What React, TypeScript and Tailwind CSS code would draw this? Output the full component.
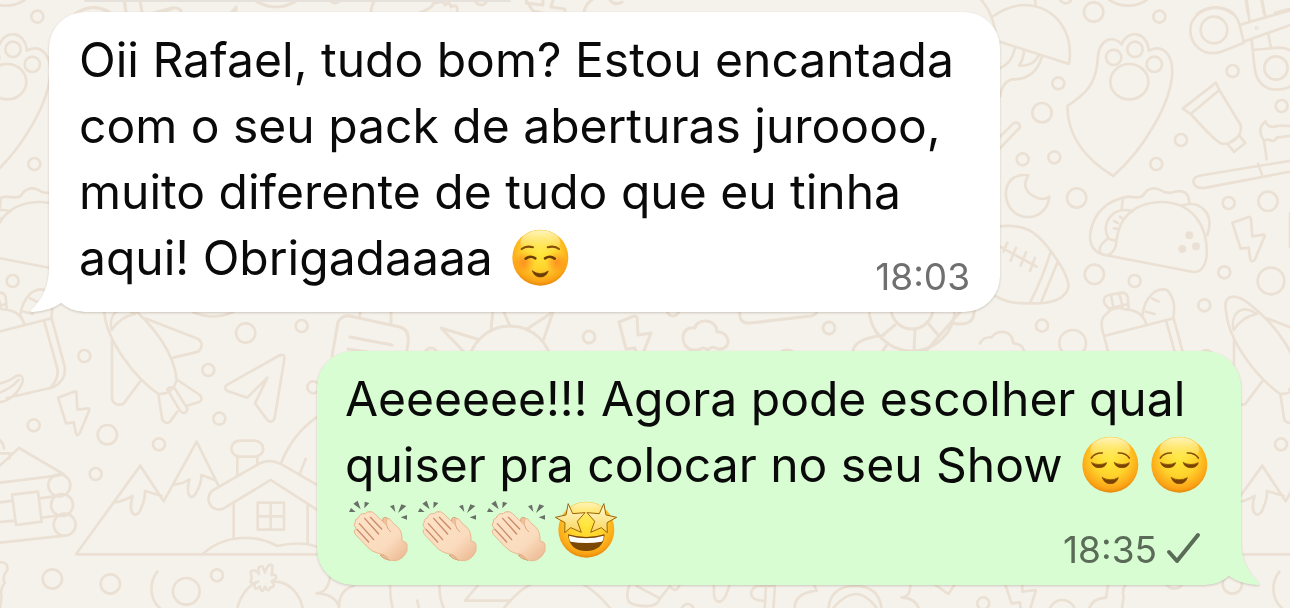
import type { ReactNode } from 'react';

const TILE_WIDTH = 1122;

type Circle = [x: number, y: number, r: number];

// ── Wallpaper ─────────────────────────────────────────

const SKY_CIRCLES: Circle[] = [
  [341, 36, 29], [538, 50, 18], [235, 250, 18], [186, 338, 29], [128, 478, 18], [223, 472, 18],
  [603, 420, 18], [529, 492, 18], [290, 594, 29], [343, 823, 29], [464, 843, 18], [186, 977, 18],
  [278, 1030, 40], [401, 172, 23], [465, 148, 23], [523, 193, 23], [702, 90, 40], [888, 204, 35],
  [758, 213, 18], [905, 318, 18], [746, 609, 18], [864, 604, 29], [733, 817, 18], [873, 843, 40],
  [673, 916, 18], [257, -8, 18],
];

const GROUND_CIRCLES: Circle[] = [
  [737, 99, 29], [905, 78, 18], [253, 168, 18], [625, 210, 18], [658, 356, 18], [940, 262, 18],
  [101, 376, 18], [322, 404, 29], [477, 433, 18], [287, 522, 18], [157, 837, 29], [331, 852, 29],
  [559, 874, 40], [651, 826, 18], [178, 556, 33], [186, 615, 33], [194, 674, 33],
];

function Circles({ items }: { items: Circle[] }) {
  return items.map(([x, y, r]) => <circle key={`${x}-${y}`} cx={x} cy={y} r={r} />);
}

function Doodles() {
  return (
    <>
      <g transform="translate(980 0) scale(0.3333)" strokeWidth="8">
        <Circles items={SKY_CIRCLES} />
        {/* umbrella */}
        <path d="M0 -5Q42 40 50 120M40 48Q90 15 135 15C225 18 283 95 267 192L50 122M165 0L167 18M105 145Q95 190 60 205M132 152Q130 180 117 197Q160 200 175 168M185 172Q165 240 95 238Q64 250 60 290M388 0Q445 34 500 0" />
        {/* paw */}
        <path d="M262 318C320 280 348 250 353 180C355 115 400 105 425 133C440 90 500 90 507 152C550 130 577 165 577 215C575 300 500 440 400 528C320 480 262 410 262 318Z" />
        <ellipse cx="448" cy="245" rx="57" ry="53" />
        {/* wand and scissors */}
        <path d="M55 415L100 370Q118 362 120 382L55 450M800 0L808 60M845 0L855 45M778 75L940 28M790 125L940 72M778 72L792 128L722 156C665 172 631 130 631 90C631 20 755 -10 778 72M865 103L872 138M815 120L818 150Q870 145 900 143C935 145 965 170 965 204C960 270 890 275 865 265C815 245 825 190 815 120" />
        <circle cx="830" cy="83" r="2" />
        {/* tube */}
        <path d="M608 326L708 248L718 270L632 342ZM718 270L782 375Q786 395 775 408Q755 435 725 431Q710 428 632 342M743 432L778 407L796 429L762 456Z" />
        {/* toothbrush */}
        <path d="M945 480L670 525Q640 528 640 545Q645 568 678 563L945 512M834 492L846 524M860 478L852 422Q828 385 857 364Q862 380 880 381Q910 372 945 382M852 422Q865 415 875 423Q890 420 890 413Q915 410 945 405" />
        {/* moon */}
        <path d="M145 526C50 512 60 655 147 651C185 650 205 620 208 590Q195 600 175 595C130 580 130 550 145 526Z" />
        {/* rugby ball */}
        <path d="M50 680C130 670 165 690 210 750C240 790 265 835 266 860C255 905 200 912 150 910C110 912 80 908 40 885M60 740L170 800M82 728L70 755M108 743L92 782M138 757L122 797M165 773L150 813M212 755Q190 830 150 908M232 788L184 905" />
        {/* taco */}
        <path d="M370 764Q325 750 331 700C340 640 380 600 445 590Q475 595 488 588C505 560 530 560 550 575Q570 582 585 575Q615 568 625 590L628 608M370 764L640 816Q672 818 680 770C685 680 640 605 540 606C450 610 415 665 410 720Q408 755 385 765M428 598L425 628M458 634C400 615 360 670 385 715Q392 720 408 722M385 715Q355 735 360 755M608 616C660 600 705 640 682 705M402 663L414 669M420 650L430 658M402 685L415 687" />
        <g fill="#ebe0d4">
          <circle cx="628" cy="706" r="8" />
          <circle cx="648" cy="739" r="8" />
          <circle cx="607" cy="747" r="8" />
        </g>
        {/* bolt */}
        <path d="M757 668L806 651Q813 650 813 658L817 709L850 704Q857 704 853 711L825 778Q815 790 811 778L806 743L782 746Z" />
        <path d="M930 740V640M0 1030Q10 1010 35 1012C50 990 95 985 100 1030Q125 1030 132 1052" />
      </g>

      <g transform="translate(0 300) scale(0.3333)" strokeWidth="8">
        <Circles items={GROUND_CIRCLES} />
        {/* grocery bag */}
        <path d="M-54 108L155 55L194 200Q200 240 160 262L20 294M133 65L172 205Q178 235 150 265M-54 108Q-70 60 -50 45L-35 30Q-10 18 8 28Q60 30 72 70M-54 108L-40 160M-35 30L-52 12Q-60 -10 -40 -15L0 -22Q18 -22 18 0L20 28M-35 25L18 12M-32 -10L-25 25M-8 -18L2 18M62 42C68 -5 100 -40 135 -30Q165 0 153 58M90 -5L110 5M72 35L98 42M-20 255Q30 245 48 228Q70 220 68 245C50 290 20 305 -10 308M-20 285Q30 270 56 240" />
        {/* bolt */}
        <path d="M174 293L222 275L229 275L232 329L264 325Q270 325 267 332L240 398Q232 412 228 400L221 367L198 370Z" />
        {/* rocket */}
        <path d="M313 38C300 -20 340 -20 380 10C470 80 525 170 530 240C520 275 500 282 475 282C400 230 320 120 313 38M335 90C325 50 350 5 405 42Q360 50 335 90M435 55L595 117Q615 135 595 155L520 173M336 120V295Q340 320 370 312L420 245M475 282L487 360Q500 375 510 365L532 335M532 240L600 285Q610 300 598 306L560 317M502 268L540 332Q555 348 563 327L524 265Q510 258 502 268" />
        {/* paper plane */}
        <path d="M835 168Q855 158 853 178L824 355Q815 372 802 360L765 310L802 233L742 293L680 272Q670 262 682 254Z" />
        {/* log cabin */}
        <path d="M-20 515L57 444L190 522M0 548L178 526M0 607L38 602M0 666L45 662M118 595L158 590M125 653L165 648M0 728L194 707M36 584L114 575L125 665L48 675ZM0 460H30L28 475M0 420Q10 430 12 445" />
        {/* mountains and house */}
        <path d="M950 763H228L421 497L491 604L590 425L657 560M340 608Q370 605 398 588C380 650 415 660 425 620Q435 600 435 573L485 588M525 553Q550 552 568 538C555 600 580 600 590 575Q605 550 604 525L645 540M712 525V470M772 490V470M722 422H760C800 422 800 470 760 470H722C685 470 685 422 722 422M960 560L845 493Q812 475 780 490L640 570C610 590 630 640 670 626L812 540L960 635M701 607V715M923 610V730M773 608H852V689H773ZM812 608V689M773 649H852M610 760C680 700 770 705 832 738Q900 722 950 740M845 485Q880 400 950 352M900 520L917 477" />
        {/* pompom hat */}
        <path d="M712 924C725 875 755 850 775 845M825 845C870 845 900 885 908 924M752 815Q765 805 777 822Q770 795 788 800L795 818Q805 785 818 798L815 825Q830 820 828 835L815 845Q830 860 812 862Q805 880 795 860Q785 885 780 860Q760 875 765 850Q745 850 755 835Z" />
        <path d="M472 815C445 850 450 900 480 924M0 787Q25 785 22 810Q5 832 14 848Q-2 870 5 890L0 924M-41 850L-48 893Q-90 895 -100 930" />
      </g>

      {/* strip between the bubbles */}
      <g strokeWidth="3">
        <path d="M332 356L338 322Q342 315 350 316L400 327Q410 330 408 343L406 356M359 318L361 310M391 323V310M350 337L392 345M348 349L380 354" />
        <circle cx="510" cy="368" r="42" />
        <path d="M493 310L491 329M503 310L510 326M477 339L441 328L465 353M527 329L553 312L543 341M193 312Q213 321 233 312" />
        <path d="M619 322L634 316L637 317L638 335L651 333L642 356M619 322L626 349L635 348L637 356" />
        <path d="M692 350C679 347 680 325 695 328C696 318 717 318 717 332C730 331 733 350 718 349Q712 345 708 350Q702 346 699 350Z" />
        <path d="M740 310Q738 324 750 323L811 316Q817 315 817 310M853 352Q853 339 884 335M951 323Q975 328 974 310M926 351L960 312M883 335L895 325M888 343L882 352M914 351L915 330M927 322L938 335" />
        <circle cx="912" cy="308" r="43" />
        <circle cx="912" cy="308" r="21" />
        <circle cx="589" cy="337" r="6" />
        <circle cx="673" cy="310" r="6" />
        <circle cx="829" cy="328" r="6" />
        <circle cx="431" cy="354" r="6" />
        <circle cx="787" cy="360" r="10" />
      </g>

      {/* top edge */}
      <g strokeWidth="3">
        <path d="M75 14Q93 1 111 14M124 0L126 13M140 0L142 13M153 13L172 8Q180 7 182 13M231 13L236 7V13M254 0Q276 14 298 0M375 0Q371 6 371 13M432 0Q438 6 419 13M436 3Q444 0 445 5Q450 1 451 7Q459 3 457 13M526 3L543 5V0M526 0L533 11L543 13M553 0L551 7L565 9V13M584 13Q585 4 592 0M610 0Q615 6 622 2" />
        <circle cx="335" cy="-3" r="6" />
        <circle cx="481" cy="-1" r="6" />
      </g>

      {/* bottom edge */}
      <g transform="translate(300 570) scale(0.3333)" strokeWidth="8">
        <path d="M92 0Q90 68 50 70Q105 72 117 110Q118 60 160 48M270 40Q270 90 280 120M352 92L358 120M418 40Q418 95 435 120M532 48L495 92H632M612 114Q660 55 700 40M845 40Q890 65 930 114M990 40Q970 95 1000 103Q1070 120 1080 85L1010 48M1080 85L1110 48Q1130 75 1140 40" />
        <circle cx="1163" cy="120" r="18" />
        <g transform="translate(1170 0)">
          <path d="M72 40V60Q70 95 88 95Q105 95 120 40M255 48L250 120M228 48L224 120M255 48H200C175 60 175 95 226 92M370 40L380 62Q310 70 314 120M415 120Q420 48 495 48Q570 48 575 120M430 114Q500 30 560 114M660 40Q665 80 635 82Q680 85 688 120M730 40L775 72L797 40M945 40L965 100L990 97L993 120M997 40V65L1038 60L1020 120" />
          <circle cx="880" cy="100" r="18" />
          <circle cx="1117" cy="130" r="40" />
        </g>
      </g>
    </>
  );
}

function Wallpaper() {
  return (
    <svg
      aria-hidden="true"
      className="absolute inset-0 h-full w-full"
      viewBox="0 0 1290 608"
      preserveAspectRatio="xMinYMin slice"
      fill="none"
      stroke="#ebe0d4"
      strokeLinecap="round"
      strokeLinejoin="round"
    >
      <defs>
        <radialGradient id="face" cx="0.5" cy="0.4" r="0.62">
          <stop offset="0" stopColor="#ffe83a" />
          <stop offset="0.5" stopColor="#ffd22c" />
          <stop offset="0.85" stopColor="#fba416" />
          <stop offset="1" stopColor="#e08008" />
        </radialGradient>
        <linearGradient id="shine" x1="0" y1="0" x2="0" y2="1">
          <stop offset="0" stopColor="#fffbd0" stopOpacity="0.9" />
          <stop offset="1" stopColor="#fff27a" stopOpacity="0" />
        </linearGradient>
        <radialGradient id="blush">
          <stop offset="0" stopColor="#ff6a1a" stopOpacity="0.6" />
          <stop offset="1" stopColor="#ff6a1a" stopOpacity="0" />
        </radialGradient>
        <linearGradient id="star" x1="0" y1="0" x2="0" y2="1">
          <stop offset="0" stopColor="#fffbd8" />
          <stop offset="1" stopColor="#fbd55a" />
        </linearGradient>
        <linearGradient id="skin" x1="0" y1="0" x2="1" y2="1">
          <stop offset="0" stopColor="#fde3c8" />
          <stop offset="0.65" stopColor="#fadbbd" />
          <stop offset="1" stopColor="#eab48c" />
        </linearGradient>
      </defs>
      {[-TILE_WIDTH, 0, TILE_WIDTH].map((x) => (
        <g key={x} transform={`translate(${x} 0)`}>
          <Doodles />
        </g>
      ))}
      <path d="M85 1H510" stroke="#e6e1da" strokeWidth="2" />
    </svg>
  );
}

// ── Emoji ─────────────────────────────────────────────

function Emoji({ label, children }: { label: string; children: ReactNode }) {
  return (
    <svg role="img" aria-label={label} viewBox="0 0 207 198" className="h-[66px] w-[69px] shrink-0" fill="none" strokeLinecap="round" strokeLinejoin="round">
      {children}
    </svg>
  );
}

function Face() {
  return (
    <>
      <circle cx="103" cy="98" r="84" fill="url(#face)" />
      <ellipse cx="103" cy="53" rx="60" ry="37" fill="url(#shine)" />
    </>
  );
}

function SmilingFace() {
  return (
    <Emoji label="☺️">
      <Face />
      <circle cx="55" cy="112" r="32" fill="url(#blush)" />
      <circle cx="151" cy="112" r="32" fill="url(#blush)" />
      <path d="M47 72Q60 61 81 67M125 67Q146 61 159 72" stroke="#855005" strokeWidth="6" />
      <path d="M59 101Q73 90 88 100M117 100Q132 90 146 101" stroke="#6b3c06" strokeWidth="8" />
      <path d="M79 138Q103 154 127 138Q120 156 103 156Q86 156 79 138Z" fill="#6b3c06" stroke="#6b3c06" strokeWidth="2" />
    </Emoji>
  );
}

function RelievedFace() {
  return (
    <Emoji label="😌">
      <Face />
      <path d="M46 78Q57 62 79 63M127 63Q149 62 160 78" stroke="#855005" strokeWidth="5" />
      <path d="M47 92Q69 103 92 92Q88 107 69 107Q52 107 47 92ZM115 92Q138 103 160 92Q156 107 138 107Q119 107 115 92Z" fill="#7a4303" stroke="#7a4303" strokeWidth="2" />
      <path d="M79 137Q103 150 127 137Q121 155 103 155Q85 155 79 137Z" fill="#7a4303" stroke="#7a4303" strokeWidth="2" />
    </Emoji>
  );
}

function ClappingHands() {
  return (
    <Emoji label="👏🏻">
      <g transform="translate(-15 -21)">
        <path d="M40 38L53 29L62 55ZM74 32L88 36L73 52ZM33 51L47 63H27ZM150 46L162 41L166 63ZM184 40L199 45L174 66ZM182 79L201 72V86Z" fill="#697068" />
        <path d="M128 92Q126 76 139 80Q150 84 152 100L140 190L120 192Q130 205 150 208L120 185Z" fill="#f0c39d" stroke="#d99f76" strokeWidth="3" />
        <path d="M88 62Q96 60 104 68L140 103Q137 88 143 82Q148 80 155 91Q160 99 172 107Q188 122 186 150Q200 152 201 160V180Q188 207 166 209Q150 210 143 203Q140 191 118 188Q96 184 80 166L46 130Q38 120 48 112Q38 102 46 93Q44 83 54 82Q60 65 76 68Q80 61 88 62Z" fill="url(#skin)" stroke="#e9b88f" strokeWidth="3" />
        <path d="M91 79L125 114M74 82L116 129M58 98L101 146M51 115L86 153" stroke="#c98a67" strokeWidth="4" />
        <path d="M140 104Q143 116 152 122" stroke="#dda57c" strokeWidth="3" />
      </g>
    </Emoji>
  );
}

function StarStruckFace() {
  return (
    <Emoji label="🤩">
      <g transform="translate(0 -3)">
        <Face />
      </g>
      <g transform="translate(-636 -23)">
        <g fill="url(#star)" stroke="#9c6408" strokeWidth="3">
          <path d="M685 41L698 70L735 67L712 93L724 126L692 112L674 127L675 97L646 81L677 74Z" />
          <path d="M791 41L778 70L741 67L764 93L752 126L784 112L802 127L801 97L830 81L799 74Z" />
        </g>
        <path d="M684 132Q738 148 794 132Q790 182 738 182Q688 182 684 132Z" fill="#7c4805" />
        <path d="M687 136Q738 151 791 136Q791 150 785 154Q738 162 692 154Q687 150 687 136Z" fill="#fff" />
      </g>
    </Emoji>
  );
}

// ── Messages ──────────────────────────────────────────

function IncomingTail() {
  return (
    <svg aria-hidden="true" viewBox="0 0 50 50" className="absolute bottom-0 -left-5 size-[50px]" fill="#fff">
      <path d="M20 6Q20 31 2 48Q1 50 4 50Q21 49 32 41L50 28L28 0Z" />
    </svg>
  );
}

function OutgoingTail() {
  return (
    <svg aria-hidden="true" viewBox="0 0 50 50" className="absolute -right-5 bottom-0 size-[50px]" fill="#d8fdd2">
      <path d="M30 6Q30 31 48 48Q49 50 46 50Q29 49 18 41L0 28L22 0Z" />
    </svg>
  );
}

function Line({ children }: { children: ReactNode }) {
  return <div className="flex h-[66px] items-center whitespace-pre">{children}</div>;
}

export default function App() {
  return (
    <main className="relative min-h-screen overflow-hidden bg-[#f5f2eb] font-['Inter','Liberation_Sans',sans-serif] text-[48px] leading-[66px] text-[#0a0a0a]">
      <Wallpaper />
      <div className="relative flex flex-col gap-[39px] px-[49px] pt-3">
        <article className="relative w-full max-w-[951px] self-start rounded-[36px] bg-white px-[30px] py-[15px] drop-shadow-[0_1px_1px_rgba(90,70,50,0.25)]">
          <IncomingTail />
          <Line>Oii Rafael, tudo bom? Estou encantada</Line>
          <Line>com o seu pack de aberturas juroooo,</Line>
          <Line>muito diferente de tudo que eu tinha</Line>
          <div className="flex min-h-[72px] justify-between">
            <Line>
              aqui! Obrigadaaaa <SmilingFace />
            </Line>
            <time className="self-end text-[37px] leading-10 text-[#6f6f6f]">18:03</time>
          </div>
        </article>

        <article className="relative w-full max-w-[924px] self-end rounded-[36px] bg-[#d8fdd2] px-[28px] py-[15px] drop-shadow-[0_1px_1px_rgba(90,70,50,0.25)]">
          <OutgoingTail />
          <Line>Aeeeeee!!! Agora pode escolher qual</Line>
          <Line>
            quiser pra colocar no seu Show <RelievedFace />
            <RelievedFace />
          </Line>
          <div className="flex min-h-[72px] justify-between">
            <Line>
              <ClappingHands />
              <ClappingHands />
              <ClappingHands />
              <StarStruckFace />
            </Line>
            <div className="flex items-center gap-2 self-end text-[#5a6b57]">
              <time className="text-[37px] leading-10">18:35</time>
              <svg role="img" aria-label="Enviada" viewBox="0 0 48 40" className="h-10 w-12" fill="none" stroke="currentColor" strokeWidth="4" strokeLinecap="round" strokeLinejoin="round">
                <path d="M4 22L12 31L33 5" />
              </svg>
            </div>
          </div>
        </article>
      </div>
    </main>
  );
}
